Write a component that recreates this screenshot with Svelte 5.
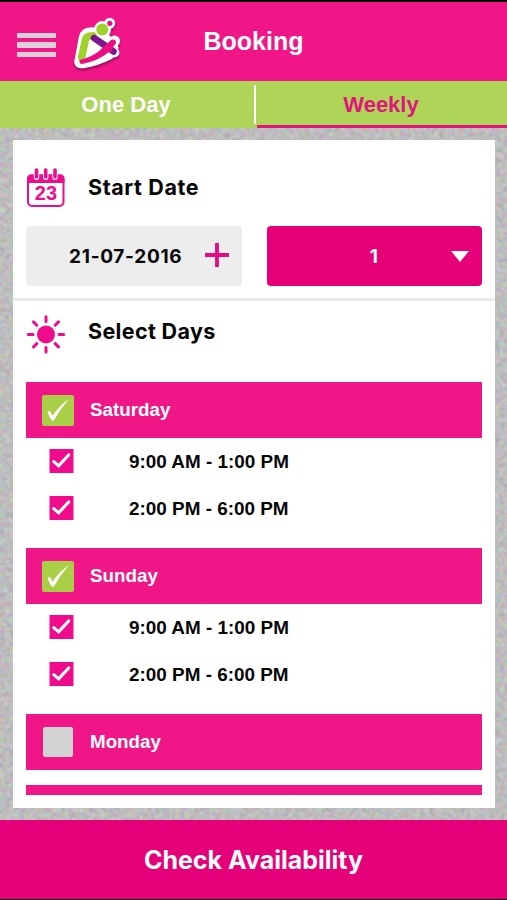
<script lang="ts">
	interface Slot {
		label: string;
		checked: boolean;
	}

	interface Day {
		name: string;
		checked: boolean;
		slots: Slot[];
	}

	const tabs = ["One Day", "Weekly"];
	let activeTab = $state("Weekly");

	let days: Day[] = $state([
		{
			name: "Saturday",
			checked: true,
			slots: [
				{ label: "9:00 AM - 1:00 PM", checked: true },
				{ label: "2:00 PM - 6:00 PM", checked: true },
			],
		},
		{
			name: "Sunday",
			checked: true,
			slots: [
				{ label: "9:00 AM - 1:00 PM", checked: true },
				{ label: "2:00 PM - 6:00 PM", checked: true },
			],
		},
		{ name: "Monday", checked: false, slots: [] },
		{ name: "", checked: false, slots: [] },
	]);
</script>

<div class="screen">
	<header class="header">
		<button class="menu" aria-label="Menu">
			<span></span>
			<span></span>
			<span></span>
		</button>
		<svg class="logo" viewBox="0 0 58 62" aria-hidden="true">
			<g class="logo-outline">
				<path d="M12.5 50 L17 26 Q18 21.5 24 21.5 L34 24 L44 36 L40 42 Q28 48 15 50 Z" />
				<circle cx="34.5" cy="17.5" r="6" />
				<circle cx="41.7" cy="11.3" r="3" />
				<circle cx="46.5" cy="29" r="3" />
				<circle cx="46.3" cy="40.5" r="2.6" />
			</g>
			<path d="M13.7 45.5 L17.3 28 Q18 23.8 25 23.8" fill="none" stroke="#a0d22b" stroke-width="7.5" stroke-linecap="round" stroke-linejoin="round" />
			<path d="M26 26 L40 35.5 L45.5 39.5" fill="none" stroke="#7a1790" stroke-width="6.6" stroke-linecap="round" />
			<path d="M22 27.5 L36 38 L18.5 47 Z" fill="#fff" />
			<path d="M11.5 48 Q21 46 30 40 L42.5 28.5 Q45 26.5 47.5 28.5 Q49 31 46.5 33 L44.5 36 Q45 39 41 40 Q30 49 14 52 Q11 52 11.5 48 Z" fill="#ed0c84" />
			<circle cx="34.3" cy="17.6" r="6" fill="#a0d22b" />
			<circle cx="41.8" cy="11.3" r="2.6" fill="#ed0c84" />
		</svg>
		<h1>Booking</h1>
	</header>

	<nav class="tabs">
		{#each tabs as tab}
			<button class="tab" class:active={tab === activeTab} onclick={() => (activeTab = tab)}>
				{tab}
			</button>
		{/each}
	</nav>

	<main class="content">
		<svg class="grain" aria-hidden="true">
			<filter id="grain" x="0" y="0" width="100%" height="100%" color-interpolation-filters="sRGB">
				<feTurbulence type="fractalNoise" baseFrequency="0.2" numOctaves="2" seed="4" />
				<feColorMatrix
					values="0.24 0 0 0 0.62
						0 0.24 0 0 0.62
						0 0 0.24 0 0.62
						0 0 0 0 1"
				/>
			</filter>
			<rect width="100%" height="100%" filter="url(#grain)" />
		</svg>

		<div class="card">
			<section class="start">
				<div class="section-title">
					<svg class="icon" viewBox="0 0 40 40" aria-hidden="true">
						<rect x="2" y="8.5" width="35.5" height="30.5" rx="4" fill="#fff" stroke="#ed0c8b" stroke-width="2" />
						<path d="M1 16 V12 Q1 7.5 5 7.5 H34.5 Q38.5 7.5 38.5 12 V16 Z" fill="#ed0c8b" />
						<path d="M10.5 4 V10.3 M19.7 4 V10.3 M29 4 V10.3" stroke="#fff" stroke-width="5.4" stroke-linecap="round" />
						<path d="M10.5 3 V10 M19.7 3 V10 M29 3 V10" stroke="#ed0c8b" stroke-width="3.6" stroke-linecap="round" />
						<text x="19.9" y="33.3" text-anchor="middle">23</text>
					</svg>
					<h2>Start Date</h2>
				</div>
				<div class="fields">
					<button class="field date">
						<span>21-07-2016</span>
						<svg class="plus" viewBox="0 0 24 24" aria-hidden="true">
							<path d="M12 0 V24 M0 12 H24" stroke="#e5087e" stroke-width="3.8" />
						</svg>
					</button>
					<button class="field weeks">
						<span>1</span>
						<svg class="caret" viewBox="0 0 18 11" aria-hidden="true">
							<path d="M0 0 H18 L9 11 Z" fill="#fff" />
						</svg>
					</button>
				</div>
			</section>

			<section class="select">
				<div class="section-title">
					<svg class="icon" viewBox="0 0 40 40" aria-hidden="true">
						<circle cx="20" cy="20.4" r="9" fill="#f00a8c" />
						<path
							d="M20 2.8 V7.4 M20 33.4 V38 M2.3 20.4 H7 M33 20.4 H37.7 M7.5 7.9 L10.8 11.2 M29.2 29.6 L32.5 32.9 M7.5 32.9 L10.8 29.6 M29.2 11.2 L32.5 7.9"
							stroke="#f00a8c"
							stroke-width="3"
							stroke-linecap="round"
						/>
					</svg>
					<h2>Select Days</h2>
				</div>

				<div class="days">
					{#each days as day}
						<button class="day" onclick={() => (day.checked = !day.checked)}>
							<span class="day-box" class:checked={day.checked}>
								{#if day.checked}
									<svg viewBox="0 0 32 31" aria-hidden="true">
										<path d="M5.4 17.4 Q7.4 14.6 8.9 17.6 L10.6 20.8 Q17 10.5 27 4 Q18.5 13.5 12.4 24.8 Q10.6 27 9 24.4 Z" fill="#fff" />
									</svg>
								{/if}
							</span>
							<span>{day.name}</span>
						</button>
						{#if day.slots.length > 0}
							<div class="slots">
								{#each day.slots as slot}
									<button class="slot" onclick={() => (slot.checked = !slot.checked)}>
										<svg class="slot-box" viewBox="0 0 25 24" aria-hidden="true">
											<rect x="0.5" width="24" height="24" fill={slot.checked ? "#f00a8c" : "#d3d3d3"} />
											{#if slot.checked}
												<path d="M4.8 12.6 L9.6 16.8 L19.7 6" fill="none" stroke="#fff" stroke-width="3.1" stroke-linecap="round" />
											{/if}
										</svg>
										<span>{slot.label}</span>
									</button>
								{/each}
							</div>
						{/if}
					{/each}
				</div>
			</section>
		</div>
	</main>

	<button class="submit">Check Availability</button>
</div>

<style>
	:global(body) {
		background: #000;
	}

	.screen {
		display: flex;
		flex-direction: column;
		box-sizing: border-box;
		width: 100%;
		height: 900px;
		padding: 2px 0 1px;
		background: #000;
		font-family: "Liberation Sans", Arial, sans-serif;
		font-weight: 700;
		overflow: hidden;
	}

	button {
		padding: 0;
		border: none;
		background: none;
		font: inherit;
		color: inherit;
		cursor: pointer;
	}

	h1,
	h2 {
		margin: 0;
	}

	.header {
		display: grid;
		grid-template-columns: 56px 72px 1fr 128px;
		align-items: center;
		flex: none;
		height: 79px;
		background: #f01688;
		color: #fff;
	}

	.header h1 {
		padding-bottom: 2px;
		font-size: 25px;
		line-height: 30px;
		text-align: center;
	}

	.menu {
		display: flex;
		flex-direction: column;
		gap: 4px;
		width: 39px;
		margin: 7px 0 0 17px;
	}

	.menu span {
		height: 5.5px;
		background: #dfd0d8;
	}

	.logo {
		width: 58px;
		height: 62px;
		margin: 3px 0 0 12px;
		filter: drop-shadow(0 2px 1px rgba(90, 0, 60, 0.6));
	}

	.logo-outline {
		fill: #fff;
		stroke: #fff;
		stroke-width: 12.5px;
		stroke-linecap: round;
		stroke-linejoin: round;
	}

	.logo-outline circle {
		stroke-width: 5px;
	}

	.tabs {
		display: grid;
		grid-template-columns: 256px 1fr;
		column-gap: 1px;
		flex: none;
		height: 47px;
		background: #aed458;
	}

	.tab {
		border-bottom: 3px solid transparent;
		padding: 3px 2px 0 0;
		color: #fff;
		font-size: 22px;
	}

	.tab.active {
		border-bottom-color: #e0147c;
		color: #e0147c;
	}

	.tab:first-child {
		border-right: 2px solid #fff;
		border-bottom: none;
		margin: 4px 0;
		padding-top: 0;
	}

	.content {
		position: relative;
		flex: 1;
		min-height: 0;
		padding: 12px 12px 12px 13px;
		background: #bdbdbd;
	}

	.grain {
		position: absolute;
		inset: 0;
		width: 100%;
		height: 100%;
	}

	.card {
		position: relative;
		box-sizing: border-box;
		height: 100%;
		background: #fff;
		color: #060606;
	}

	.start {
		box-sizing: border-box;
		height: 161px;
		padding: 27px 13px 0;
		border-bottom: 3px solid #ebebeb;
	}

	.section-title {
		display: flex;
		height: 40px;
	}

	.section-title h2 {
		font-family: Inter, "Liberation Sans", sans-serif;
		font-size: 21.5px;
		font-weight: 650;
		line-height: 40px;
		letter-spacing: 0.6px;
	}

	.icon {
		width: 40px;
		height: 40px;
		margin-right: 22px;
	}

	.icon text {
		fill: #ed0c8b;
		font-size: 20px;
	}

	.fields {
		display: grid;
		grid-template-columns: 1fr 1fr;
		gap: 25px;
		margin-top: 19px;
	}

	.field {
		display: grid;
		align-items: center;
		height: 60px;
		border-radius: 4px;
		font-family: Inter, "Liberation Sans", sans-serif;
		font-size: 19px;
		font-weight: 650;
		letter-spacing: 0.7px;
	}

	.date {
		grid-template-columns: 1fr 24px;
		padding: 0 13px 0 21px;
		background: #ededed;
	}

	.plus {
		width: 24px;
		height: 24px;
		margin-top: -2px;
	}

	.weeks {
		grid-template-columns: 1fr 18px;
		padding: 0 13px 0 31px;
		background: #e50079;
		color: #fff;
	}

	.caret {
		width: 18px;
		height: 11px;
	}

	.select {
		padding: 13px 13px 0;
	}

	.select h2 {
		letter-spacing: 0.35px;
		line-height: 34px;
	}

	.days {
		height: 413px;
		margin-top: 28px;
		overflow: hidden;
	}

	.day {
		display: flex;
		align-items: center;
		width: 100%;
		height: 56px;
		padding-left: 16px;
		margin-bottom: 15px;
		background: #f01688;
		color: #fff;
		font-size: 18.8px;
	}

	.day:has(+ .slots) {
		margin-bottom: 0;
	}

	.day-box {
		width: 30px;
		height: 30px;
		margin: 0 17px 0 1px;
		border-radius: 2px;
		background: #d3d3d3;
	}

	.day-box.checked {
		width: 32px;
		height: 31px;
		margin: 0 16px 0 0;
		background: #a8cf45;
	}

	.day-box svg {
		display: block;
	}

	.slots {
		display: flex;
		flex-direction: column;
		height: 110px;
	}

	.slot {
		display: flex;
		align-items: center;
		gap: 55px;
		height: 47.3px;
		padding-left: 23px;
		font-size: 18.9px;
	}

	.slot-box {
		width: 25px;
		height: 24px;
		margin-top: -2px;
	}

	.submit {
		flex: none;
		height: 79px;
		background: #e50079;
		color: #fff;
		font-family: Inter, "Liberation Sans", sans-serif;
		font-size: 25px;
		font-weight: 650;
	}
</style>
